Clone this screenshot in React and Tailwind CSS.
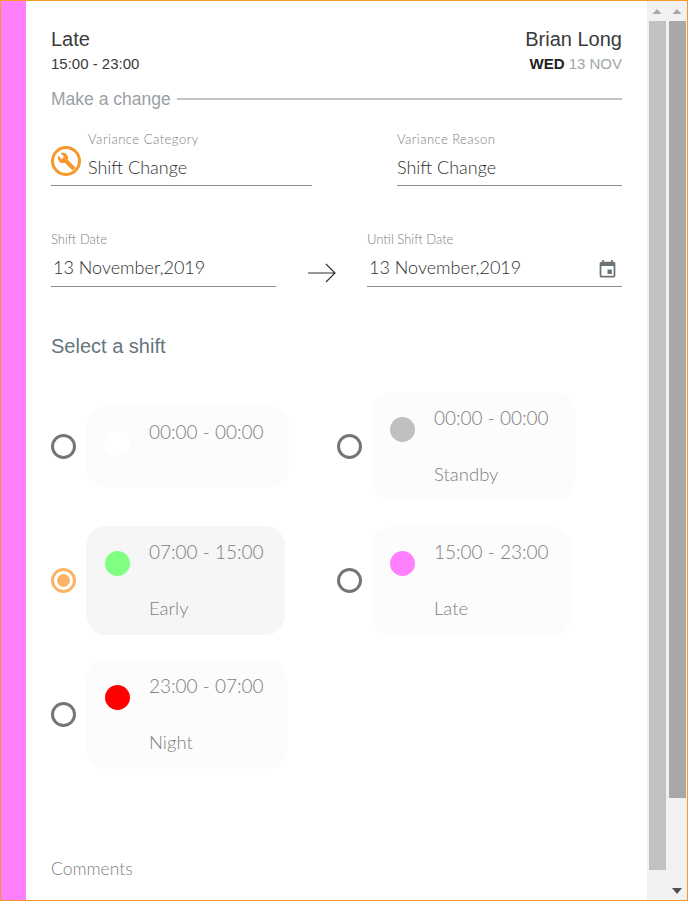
const futura = 'font-["Lato",sans-serif] font-light';

function Field({ label, value, className, labelClass = '', rowClass, valueClass = '', children }) {
  return (
    <div className={className}>
      <div className={`${futura} ${labelClass} text-[13px] leading-[18px] text-[#808080]`}>{label}</div>
      <div className={`${rowClass} flex items-center justify-between border-b border-[#8c8c8c]`}>
        <span className={`${futura} ${valueClass} text-[18px] leading-[24px] text-[#2e2e2e]`}>{value}</span>
        {children}
      </div>
    </div>
  );
}

function Radio({ selected }) {
  if (selected) {
    return (
      <div className="flex h-[25px] w-[25px] shrink-0 items-center justify-center rounded-full border-[3px] border-[#fbb367]">
        <div className="h-[13px] w-[13px] rounded-full bg-[#fbb367]"></div>
      </div>
    );
  }
  return <div className="h-[25px] w-[25px] shrink-0 rounded-full border-[3px] border-[#757575]"></div>;
}

function ShiftCard({ time, name, dot, selected, className }) {
  return (
    <div className="flex items-center gap-[10px]">
      <Radio selected={selected} />
      <div className={`${className} flex rounded-[20px] pt-[12px]`}>
        <div className={`${dot} mt-[13px] h-[25px] w-[25px] shrink-0 rounded-full`}></div>
        <div className={`${futura} ml-[19px] whitespace-nowrap text-[#808080]`}>
          <div className="text-[19px] leading-[28px]">{time}</div>
          {name && <div className="mt-[28px] text-[18.5px] leading-[28px]">{name}</div>}
        </div>
      </div>
    </div>
  );
}

function Scrollbar({ thumb, dark }) {
  return (
    <div className="flex h-full w-[20px] flex-col items-center bg-[#f1f1f1]">
      <svg width="10" height="20" viewBox="0 0 10 20" className="shrink-0">
        <path d="M0.5 13 L5 8 L9.5 13 Z" fill="#a8a8a8" />
      </svg>
      <div className={`${thumb} w-[17px] shrink-0`}></div>
      {dark && (
        <svg width="10" height="8" viewBox="0 0 10 8" className="mt-auto mb-[5px] shrink-0">
          <path d="M0 1 H10 L5 7 Z" fill="#505050" />
        </svg>
      )}
    </div>
  );
}

export default function App() {
  return (
    <div className='flex h-[901px] w-[688px] overflow-hidden border border-[#f7982a] bg-white font-["Liberation_Sans",sans-serif]'>
      <div className="w-[25px] shrink-0 bg-[#ff80ff]"></div>

      <div className="h-full w-[621px] shrink-0 overflow-hidden px-[25px] pt-[26px]">
        {/* Header */}
        <div className="flex justify-between">
          <div>
            <div className="text-[20px] leading-[24px] text-[#3a3a3a]">Late</div>
            <div className="mt-[4px] text-[15px] leading-[18px] text-[#3a3a3a]">15:00 - 23:00</div>
          </div>
          <div className="text-right">
            <div className="text-[20px] leading-[24px] text-[#3a3a3a]">Brian Long</div>
            <div className="mt-[4px] text-[15px] leading-[18px] text-[#a0a6aa]">
              <span className="font-bold text-[#222]">WED</span> 13 NOV
            </div>
          </div>
        </div>

        <div className="mt-[16px] flex items-center gap-[6px]">
          <span className="text-[17.5px] leading-[20px] text-[#9aa1a6]">Make a change</span>
          <div className="h-[2px] flex-1 bg-[#c0c5c7]"></div>
        </div>

        {/* Variance */}
        <div className="mt-[21px] flex justify-between">
          <div className="relative w-[261px]">
            <Field label="Variance Category" value="Shift Change" labelClass="pl-[37px] tracking-[0.5px]" valueClass="pl-[37px]" rowClass="mt-[6px] h-[32px] pb-[6px]" />
            <div className="absolute left-0 top-[16px] flex h-[30px] w-[30px] items-center justify-center rounded-full border-[3px] border-[#f7982a]">
              <svg width="19" height="19" viewBox="0 0 24 24" fill="#f7982a">
                <path d="M22.7 19l-9.1-9.1c.9-2.3.4-5-1.5-6.9-2-2-5-2.4-7.4-1.3L9 6 6 9 1.6 4.7C.4 7.1.9 10.1 2.9 12.1c1.9 1.9 4.6 2.4 6.9 1.5l9.1 9.1c.4.4 1 .4 1.4 0l2.3-2.3c.5-.4.5-1.1.1-1.4z" />
              </svg>
            </div>
          </div>
          <Field label="Variance Reason" value="Shift Change" labelClass="tracking-[0.45px]" rowClass="mt-[6px] h-[32px] pb-[6px]" className="w-[225px]" />
        </div>

        {/* Dates */}
        <div className="mt-[44px] flex items-end">
          <Field label="Shift Date" value="13 November,2019" valueClass="pl-[2px]" rowClass="mt-[6px] h-[33px] pb-[7px]" className="w-[225px]" />
          <div className="flex w-[91px] justify-center pb-[3px]">
            <svg width="30" height="22" viewBox="0 0 30 22" fill="none" stroke="#333" strokeWidth="1.2">
              <path d="M1 11 H28 M19 2 L28 11 L19 20" />
            </svg>
          </div>
          <Field label="Until Shift Date" value="13 November,2019" valueClass="pl-[2px]" rowClass="mt-[6px] h-[33px] pb-[7px]" className="w-[255px]">
            <svg width="21" height="21" viewBox="0 0 24 24" fill="#6a7478" className="mr-[4px] mt-[5px]">
              <path d="M17 12h-5v5h5v-5zM16 1v2H8V1H6v2H5c-1.11 0-1.99.9-1.99 2L3 19c0 1.1.89 2 2 2h14c1.1 0 2-.9 2-2V5c0-1.1-.9-2-2-2h-1V1h-2zm3 18H5V8h14v11z" />
            </svg>
          </Field>
        </div>

        <div className="mt-[47px] text-[20px] leading-[24px] text-[#64747e]">Select a shift</div>

        {/* Shifts */}
        <div className="mt-[34px] grid grid-cols-[286px_286px] items-center gap-y-[25px]">
          <ShiftCard time="00:00 - 00:00" dot="bg-white" className="h-[81px] w-[203px] bg-[#fcfcfc] pl-[19px]" />
          <ShiftCard time="00:00 - 00:00" name="Standby" dot="bg-[#bfbfbf]" className="h-[109px] w-[203px] bg-[#fcfcfc] pl-[18px]" />
          <ShiftCard time="07:00 - 15:00" name="Early" dot="bg-[#80ff80]" selected className="h-[109px] w-[199px] bg-[#f6f6f6] pl-[19px]" />
          <ShiftCard time="15:00 - 23:00" name="Late" dot="bg-[#ff80ff]" className="h-[109px] w-[199px] bg-[#fcfcfc] pl-[18px]" />
          <ShiftCard time="23:00 - 07:00" name="Night" dot="bg-[#ff0000]" className="h-[109px] w-[201px] bg-[#fcfcfc] pl-[19px]" />
        </div>

        <div className={`${futura} mt-[88px] text-[17.5px] leading-[24px] text-[#808080]`}>Comments</div>
      </div>

      <div className="flex h-full shrink-0">
        <Scrollbar thumb="h-[849px] bg-[#c1c1c1]" />
        <Scrollbar thumb="h-[777px] bg-[#a8a8a8]" dark />
      </div>
    </div>
  );
}
